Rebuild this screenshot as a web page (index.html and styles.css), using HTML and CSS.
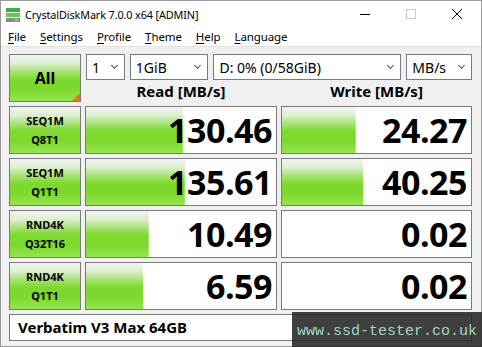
FILE: index.html
```html
<!DOCTYPE html>
<html>
<head>
<meta charset="utf-8">
<link rel="stylesheet" href="styles.css">
</head>
<body>
<div class="window">
  <div class="titlebar">
    <svg class="appicon" width="16" height="16" viewBox="0 0 16 16">
      <rect x="1" y="1" width="14" height="4" fill="#3cb043"/>
      <rect x="1" y="6" width="14" height="4" fill="#5ccf4a"/>
      <rect x="1" y="11" width="14" height="4" fill="#8a8a8a"/>
      <rect x="10" y="12.5" width="3" height="1" fill="#e0e0e0"/>
    </svg>
    <span class="title">CrystalDiskMark 7.0.0 x64 [ADMIN]</span>
    <div class="controls">
      <svg class="ctl" width="46" height="26" viewBox="0 0 46 26"><path d="M18 13.5h10" stroke="#000" stroke-width="1"/></svg>
      <svg class="ctl" width="46" height="26" viewBox="0 0 46 26"><rect x="18.5" y="8.5" width="9" height="9" fill="none" stroke="#c8c8c8"/></svg>
      <svg class="ctl" width="46" height="26" viewBox="0 0 46 26"><path d="M18 8l10 10M28 8l-10 10" stroke="#000" stroke-width="1"/></svg>
    </div>
  </div>
  <div class="menubar">
    <span class="mi"><u>F</u>ile</span>
    <span class="mi"><u>S</u>ettings</span>
    <span class="mi"><u>P</u>rofile</span>
    <span class="mi"><u>T</u>heme</span>
    <span class="mi"><u>H</u>elp</span>
    <span class="mi"><u>L</u>anguage</span>
  </div>
  <div class="content">
    <div class="grid">
      <div class="btn allbtn">All<span class="corner"></span></div>
      <div class="combos">
        <div class="combo c1"><span>1</span><i class="chev"></i></div>
        <div class="combo c2"><span>1GiB</span><i class="chev"></i></div>
        <div class="combo c3"><span>D: 0% (0/58GiB)</span><i class="chev"></i></div>
        <div class="combo c4"><span>MB/s</span><i class="chev"></i></div>
      </div>
      <div class="head hread">Read [MB/s]</div>
      <div class="head hwrite">Write [MB/s]</div>

      <div class="btn test">SEQ1M<br>Q8T1</div>
      <div class="val" style="--w:51%">130.46</div>
      <div class="val" style="--w:39%">24.27</div>

      <div class="btn test">SEQ1M<br>Q1T1</div>
      <div class="val" style="--w:52%">135.61</div>
      <div class="val" style="--w:43%">40.25</div>

      <div class="btn test">RND4K<br>Q32T16</div>
      <div class="val" style="--w:33%">10.49</div>
      <div class="val" style="--w:0%">0.02</div>

      <div class="btn test">RND4K<br>Q1T1</div>
      <div class="val" style="--w:30%">6.59</div>
      <div class="val" style="--w:0%">0.02</div>

      <div class="name">Verbatim V3 Max 64GB</div>
    </div>
    <div class="watermark">www.ssd-tester.co.uk</div>
  </div>
</div>
</body>
</html>
```
FILE: styles.css
```css
* { box-sizing: border-box; }
html, body { margin: 0; padding: 0; }
body { width: 482px; height: 347px; overflow: hidden; background: #f0f0f0; }
.window {
  width: 482px; height: 347px;
  border: 1px solid #9a9a9a;
  background: #f0f0f0;
  font-family: "Noto Sans", "Open Sans", sans-serif;
  color: #000;
  display: flex; flex-direction: column;
}
.titlebar {
  height: 26px; background: #fff;
  display: flex; align-items: center;
  padding-left: 4px;
}
.appicon { margin-top: 1px; }
.title { font-size: 10.8px; margin-left: 4px; letter-spacing: -0.1px; }
.controls { margin-left: auto; display: flex; margin-right: 1px; }
.ctl { display: block; }
.menubar {
  height: 20px; background: #fff;
  display: flex; align-items: center;
  padding-left: 7px;
  border-bottom: 1px solid #e2e2e2;
}
.mi { font-size: 11.5px; margin-right: 14px; letter-spacing: -0.1px; }
.mi u { text-decoration-thickness: 1px; text-underline-offset: 2px; }
.content { flex: 1; position: relative; padding: 7px 0 0 8px; }
.grid {
  display: grid;
  grid-template-columns: 72px 192px 191px;
  grid-template-rows: 26px 22px 52px 52px 52px 52px 31px;
  column-gap: 4px;
  row-gap: 0;
}
.grid > .btn.test, .grid > .val, .grid > .name { margin-top: 4px; }
.btn {
  border: 1px solid #7a7a7a;
  background: linear-gradient(to bottom, #f2f3f0 0%, #dcefcf 18%, #a8e278 36%, #7fd92f 52%, #7cd82a 72%, #94e450 100%);
  font-weight: 700;
  display: flex; align-items: center; justify-content: center;
  text-align: center;
}
.allbtn {
  grid-row: 1 / span 2; grid-column: 1;
  font-size: 16px; position: relative;
}
.corner {
  position: absolute; right: 0; bottom: 0;
  width: 0; height: 0;
  border-left: 8px solid transparent;
  border-bottom: 8px solid #e8742a;
}
.test { font-size: 11px; line-height: 19px; }
.combos {
  grid-row: 1; grid-column: 2 / span 2;
  display: flex; gap: 5px; padding-left: 1px;
}
.combo {
  height: 26px; border: 1px solid #7a7a7a; background: #fff;
  display: flex; align-items: center; justify-content: space-between;
  font-size: 14px; padding: 0 7px 0 5px;
}
.c1 { width: 39px; }
.c2 { width: 79px; }
.c3 { width: 189px; }
.c4 { width: 66px; }
.chev {
  width: 5px; height: 5px;
  border-right: 1px solid #555; border-bottom: 1px solid #555;
  transform: rotate(45deg); margin-top: -3px;
}
.head {
  grid-row: 2; font-size: 15px; font-weight: 700;
  text-align: center; line-height: 22px;
}
.hread { grid-column: 2; }
.hwrite { grid-column: 3; }
.val {
  border: 1px solid #7a7a7a;
  background: #fff linear-gradient(to bottom, #f2f3f0 0%, #dcefcf 18%, #a8e278 36%, #7fd92f 52%, #7cd82a 72%, #94e450 100%) no-repeat left top;
  background-size: var(--w) 100%;
  font-family: "Open Sans", "Noto Sans", sans-serif;
  font-weight: 700; font-size: 34px; letter-spacing: -0.5px;
  text-align: right; padding-right: 4px;
  line-height: 46px;
}
.name {
  grid-column: 1 / span 3;
  border: 1px solid #7a7a7a; background: #fff;
  font-size: 15px; font-weight: 700;
  padding-left: 8px; line-height: 25px;
}
.watermark {
  position: absolute; right: -1px; bottom: -1px;
  width: 190px; height: 35px;
  background: rgba(38,38,38,0.88);
  color: #9ed6c0;
  font-family: "Liberation Mono", monospace;
  font-size: 15px;
  display: flex; align-items: center; justify-content: center;
  padding-top: 4px;
}
```
